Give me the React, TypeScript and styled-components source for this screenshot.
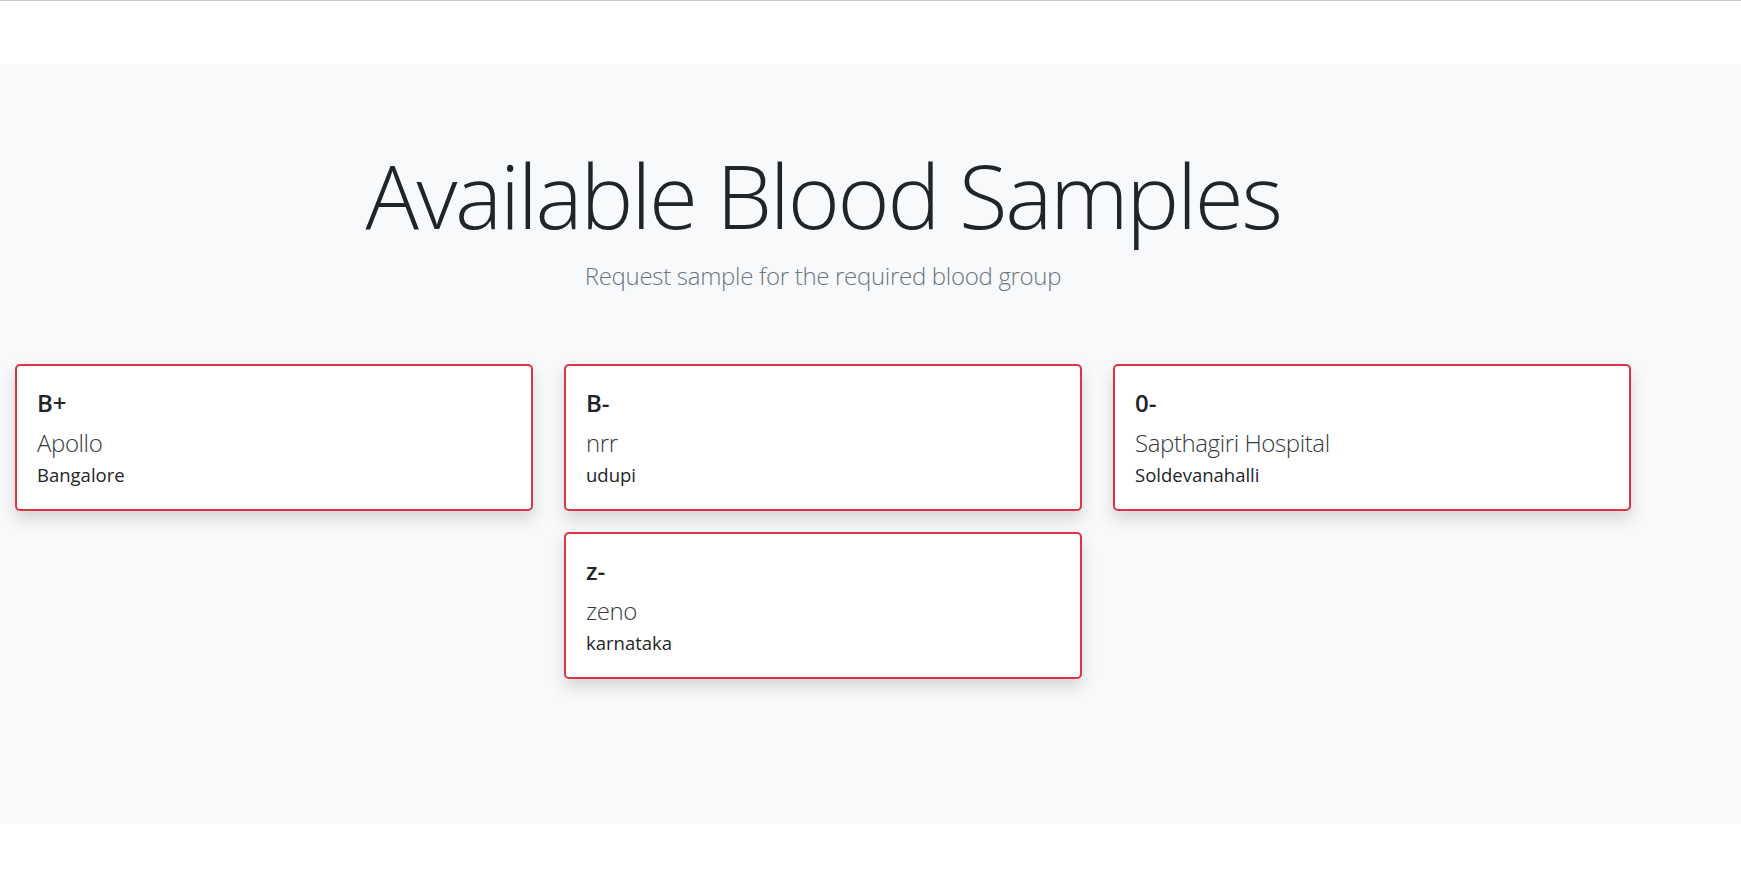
import React from 'react';
import styled, { createGlobalStyle } from 'styled-components';

const GlobalStyle = createGlobalStyle`
	* {
		box-sizing: border-box;
	}
	body {
		margin: 0;
		background-color: #fff;
		color: #212529;
		font-family: "Open Sans", "Noto Sans", sans-serif;
	}
`;

interface Sample {
	group: string;
	hospital: string;
	city: string;
}

const samples: Sample[] = [
	{ group: 'B+', hospital: 'Apollo', city: 'Bangalore' },
	{ group: 'B-', hospital: 'nrr', city: 'udupi' },
	{ group: '0-', hospital: 'Sapthagiri Hospital', city: 'Soldevanahalli' },
	{ group: 'z-', hospital: 'zeno', city: 'karnataka' },
];

const TopBar = styled.div`
	height: 64px;
	border-top: 1px solid #c8c5d0;
	background-color: #fff;
`;

const Jumbotron = styled.section`
	background-color: #f8f9fa;
	padding: 78px 0 145px;
`;

const Content = styled.div`
	width: 1646px;
	display: flex;
	flex-direction: column;
	align-items: center;
`;

const Title = styled.h1`
	margin: 0;
	font-size: 89px;
	font-weight: 300;
	line-height: 1.2;
	letter-spacing: -2.3px;
	color: #212529;
`;

const Lead = styled.p`
	margin: 9px 0 70px;
	font-size: 24px;
	font-weight: 300;
	line-height: 1.5;
	letter-spacing: -0.3px;
	color: #6c757d;
`;

const CardGrid = styled.div`
	width: 100%;
	display: flex;
	flex-wrap: wrap;
	justify-content: center;
	gap: 21px 31px;
`;

const Card = styled.div`
	width: 518px;
	height: 147px;
	padding: 23px 20px 20px;
	background-color: #fff;
	border: 2px solid #dc3545;
	border-radius: 5px;
	box-shadow: 0 0.5rem 1rem rgba(0, 0, 0, 0.15);
`;

const Group = styled.h5`
	margin: 0 0 11px;
	font-size: 24px;
	font-weight: 600;
	line-height: 1.2;
	color: #212529;
`;

const Hospital = styled.div`
	font-size: 24px;
	font-weight: 300;
	line-height: 1.2;
	letter-spacing: -0.4px;
	color: #343a40;
`;

const City = styled.div`
	margin-top: 4px;
	font-size: 18.5px;
	font-weight: 400;
	line-height: 1.5;
	color: #212529;
`;

const App = () => {
	return (
		<>
			<GlobalStyle />
			<TopBar />
			<Jumbotron>
				<Content>
					<Title>Available Blood Samples</Title>
					<Lead>Request sample for the required blood group</Lead>
					<CardGrid>
						{samples.map((s, i) => (
							<Card key={i}>
								<Group>{s.group}</Group>
								<Hospital>{s.hospital}</Hospital>
								<City>{s.city}</City>
							</Card>
						))}
					</CardGrid>
				</Content>
			</Jumbotron>
		</>
	);
};

export default App;
